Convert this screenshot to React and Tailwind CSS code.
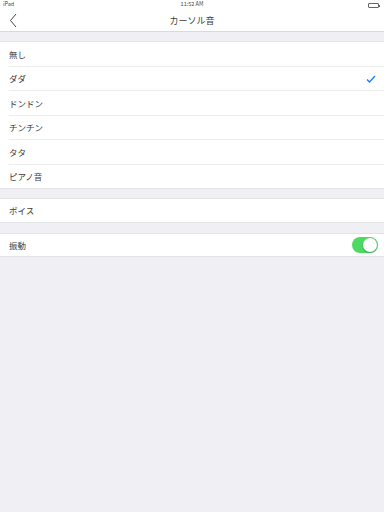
export default function App() {
  const sounds = ["無し", "ダダ", "ドンドン", "チンチン", "タタ", "ピアノ音"];
  const selected = 1;
  const font = { fontFamily: '"Noto Sans CJK JP", "Liberation Sans", sans-serif' };

  return (
    <div className="w-[384px] h-[512px] bg-[#efeff4] text-[#3c3c3c]" style={font}>
      {/* status + nav */}
      <div className="bg-white border-b border-[#d9d9dd]">
        <div className="h-[10px] flex items-center justify-between px-[3px] text-[5.5px] leading-none text-[#444]">
          <span className="w-[30px]">iPad</span>
          <span>11:52 AM</span>
          <span className="w-[30px] flex justify-end pr-[2px]">
            <span className="w-[11px] h-[5px] border border-[#666] rounded-[1px] relative">
              <span className="absolute -right-[2px] top-[1px] w-[1px] h-[2px] bg-[#666]" />
            </span>
          </span>
        </div>
        <div className="h-[21px] relative flex items-center justify-center">
          <svg className="absolute left-[9px] top-[3px]" width="9" height="15" viewBox="0 0 9 15">
            <path d="M7 1 L1.5 7.5 L7 14" fill="none" stroke="#444" strokeWidth="1" />
          </svg>
          <span className="text-[9px] leading-none">カーソル音</span>
        </div>
      </div>

      <div className="h-[9px]" />

      <div className="bg-white border-t border-[#e3e3e7]">
        {sounds.map((s, i) => {
          const last = i === sounds.length - 1;
          return (
            <div
              key={s}
              className={`h-[24.5px] flex items-center justify-between pl-[9px] pr-[8px] text-[8.5px] bg-white ${
                last
                  ? "border-b border-[#e3e3e7]"
                  : "bg-[linear-gradient(#ececef,#ececef)] bg-no-repeat bg-[length:calc(100%-9px)_1px] bg-[position:right_bottom]"
              }`}
            >
              <span>{s}</span>
              {i === selected && (
                <svg width="10" height="8" viewBox="0 0 10 8">
                  <path d="M1 4.5 L3.5 7 L9 1" fill="none" stroke="#147efb" strokeWidth="1.3" />
                </svg>
              )}
            </div>
          );
        })}
      </div>

      <div className="h-[9px]" />

      <div className="bg-white border-y border-[#e3e3e7] h-[25px] flex items-center pl-[9px] text-[8.5px]">
        ボイス
      </div>

      <div className="h-[10px]" />

      <div className="bg-white border-y border-[#e3e3e7] h-[24px] flex items-center justify-between pl-[9px] pr-[6px] text-[8.5px]">
        <span>振動</span>
        <div className="w-[26px] h-[16px] rounded-full bg-[#4cd964] relative">
          <div className="absolute right-[1px] top-[1px] w-[14px] h-[14px] rounded-full bg-white shadow-[0_1px_2px_rgba(0,0,0,0.3)]" />
        </div>
      </div>
    </div>
  );
}
